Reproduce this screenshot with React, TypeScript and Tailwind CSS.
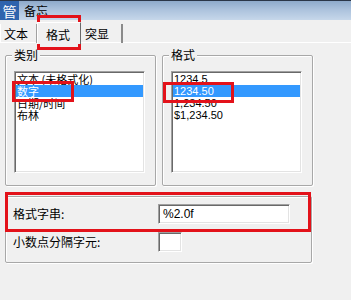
import React from "react";

const cjk = "font-['Noto_Sans_CJK_SC','Noto_Sans',sans-serif]";
const num = "font-['Liberation_Sans','Noto_Sans_CJK_SC',sans-serif]";

function GroupBox({ label, className, children }: { label: string; className: string; children?: React.ReactNode }) {
  return (
    <div className={`relative border border-[#a8a8a8] rounded-[2px] shadow-[inset_1px_1px_0_#fff,1px_1px_0_#fff] ${className}`}>
      <span className="absolute -top-[9px] left-[6px] bg-[#f0f0f0] px-[2px] leading-[16px]">{label}</span>
      {children}
    </div>
  );
}

function ListBox({ items, selected, font }: { items: string[]; selected: number; font: string }) {
  return (
    <div className="w-[131px] h-[102px] bg-white border border-t-[#a0a0a0] border-l-[#a0a0a0] border-b-white border-r-white shadow-[inset_1px_1px_0_#696969,inset_-1px_-1px_0_#e3e3e3] p-[1px] flex flex-col">
      {items.map((t, i) => (
        <div
          key={t}
          className={`h-[12px] leading-[12px] text-[11px] pl-[1px] whitespace-nowrap ${font} ${i === selected ? "bg-[#3399ff] text-white" : ""}`}
        >
          {t}
        </div>
      ))}
    </div>
  );
}

function Input({ w, value }: { w: string; value?: string }) {
  return (
    <div className={`${w} h-[20px] bg-white border border-t-[#a0a0a0] border-l-[#a0a0a0] border-b-white border-r-white shadow-[inset_1px_1px_0_#696969,inset_-1px_-1px_0_#e3e3e3] flex items-center pl-[4px] text-[12px] ${num}`}>
      {value}
    </div>
  );
}

export default function App() {
  return (
    <div className={`relative w-[351px] h-[300px] overflow-hidden bg-[#f0f0f0] text-[12px] text-black ${cjk}`}>
      {/* title bar */}
      <div className="h-[20px] flex items-center bg-gradient-to-b from-[#8eaacb] via-[#aec4de] to-[#c6d7ea] border-t border-[#2a3648]">
        <div className="w-[19px] h-[19px] bg-[#2e63ad] text-white flex items-center justify-center text-[14px] leading-none">管</div>
        <span className="ml-[5px] leading-none">备忘</span>
      </div>
      {/* tabs */}
      <div className="relative h-[23px] flex items-end">
        <div className="absolute left-0 right-0 bottom-0 h-[1px] bg-white" />
        <div className="relative h-[19px] w-[37px] flex items-center pl-[3px] border-l border-white border-r border-r-[#a0a0a0]">文本</div>
        <div className="relative z-10 h-[22px] w-[44px] -mb-[1px] flex items-start pt-[3px] pl-[8px] bg-[#f0f0f0] border-t border-l border-white border-r border-r-[#696969]">格式</div>
        <div className="relative h-[19px] w-[42px] flex items-center pl-[4px] border-r-2 border-r-[#8a8a8a]">突显</div>
      </div>
      {/* body */}
      <div className="flex flex-col px-[5px]">
        <div className="flex gap-[6px] mt-[12px]">
          <GroupBox label="类别" className="w-[151px] h-[131px] pl-[8px] pt-[15px]">
            <ListBox items={["文本 (未格式化)", "数字", "日期/时间", "布林"]} selected={1} font={cjk} />
          </GroupBox>
          <GroupBox label="格式" className="w-[151px] h-[131px] pl-[8px] pt-[15px]">
            <ListBox items={["1234.5", "1234.50", "1,234.50", "$1,234.50"]} selected={1} font={num} />
          </GroupBox>
        </div>
        <div className="mt-[10px] w-[307px] h-[67px] border border-[#a8a8a8] rounded-[2px] shadow-[inset_1px_1px_0_#fff,1px_1px_0_#fff] flex flex-col gap-[8px] pt-[7px] pl-[7px]">
          <div className="flex items-center">
            <span className="w-[145px]">格式字串:</span>
            <Input w="w-[132px]" value="%2.0f" />
          </div>
          <div className="flex items-center">
            <span className="w-[145px]">小数点分隔字元:</span>
            <Input w="w-[24px]" />
          </div>
        </div>
      </div>
      {/* red annotation boxes */}
      <div className="absolute left-[37px] top-[15px] w-[44px] h-[35px] border-[3px] border-[#e3121a]" />
      <div className="absolute left-[12px] top-[81px] w-[62px] h-[21px] border-[3px] border-[#e3121a]" />
      <div className="absolute left-[163px] top-[82px] w-[71px] h-[21px] border-[3px] border-[#e3121a]" />
      <div className="absolute left-[5px] top-[192px] w-[306px] h-[40px] border-[3px] border-[#e3121a]" />
    </div>
  );
}
